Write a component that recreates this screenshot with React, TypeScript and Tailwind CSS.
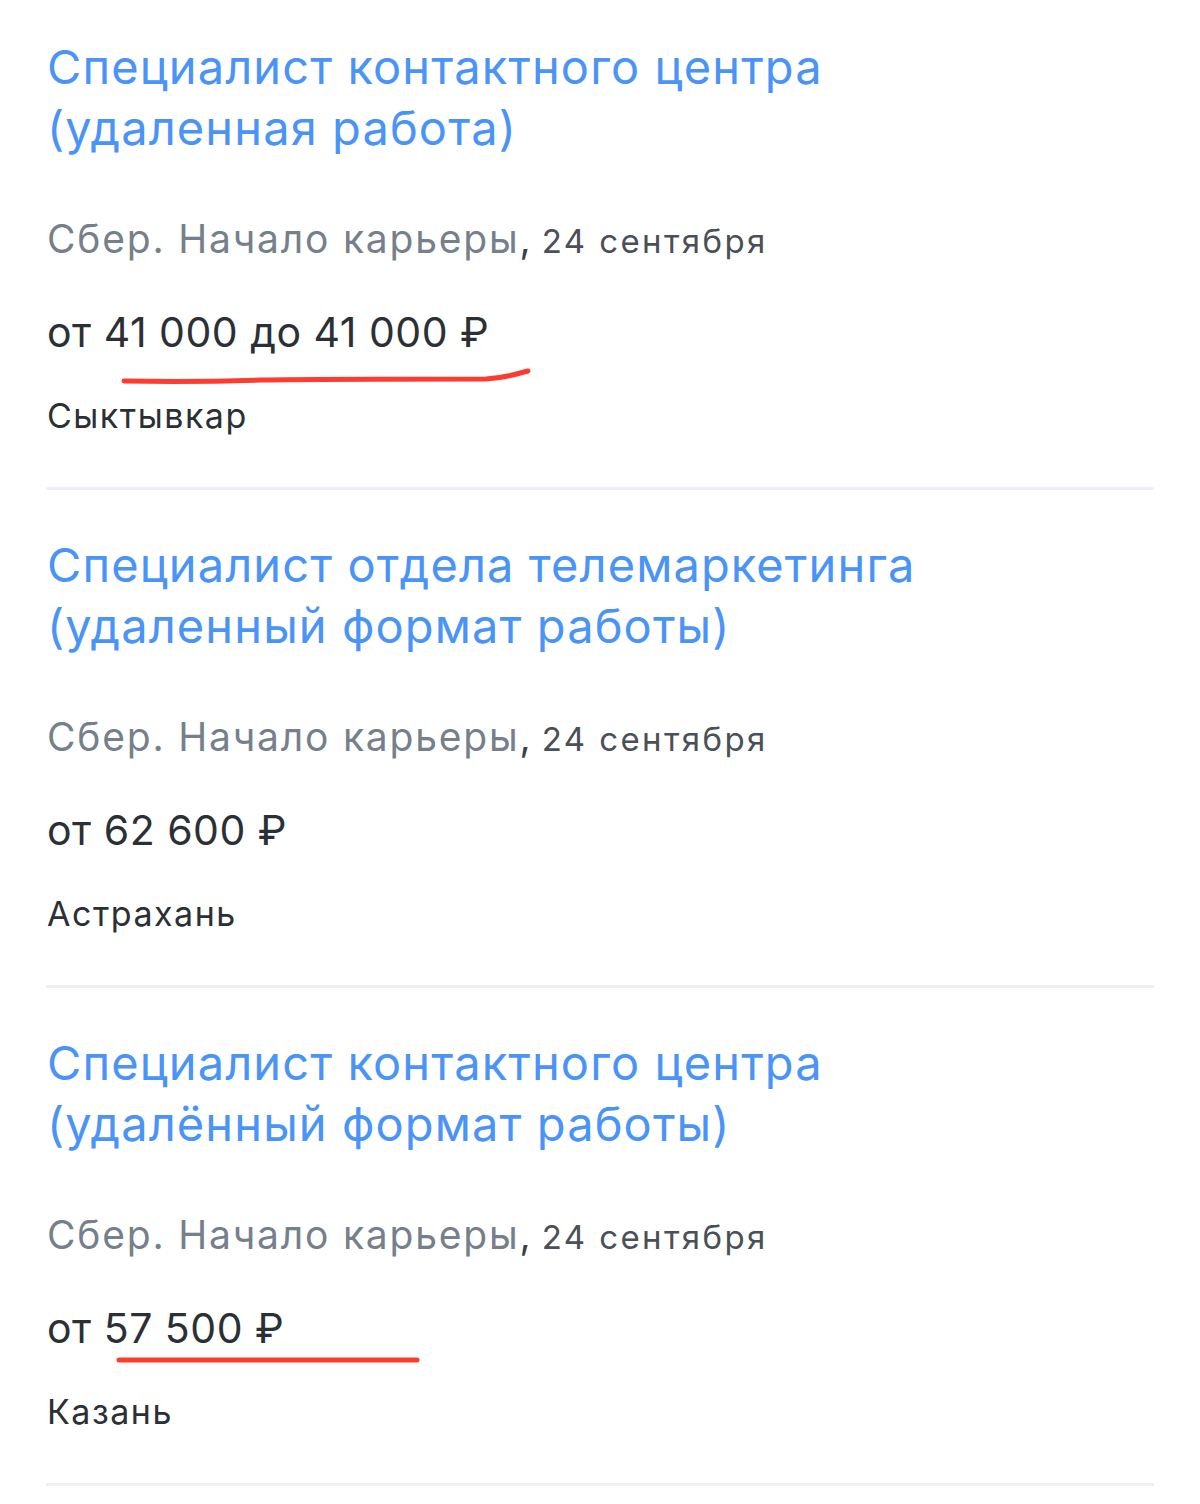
import React from 'react';

interface Vacancy {
  title: string[];
  salary: string;
  city: string;
  mark?: 'wave' | 'line';
}

const vacancies: Vacancy[] = [
  {
    title: ['Специалист контактного центра', '(удаленная работа)'],
    salary: 'от 41 000 до 41 000 ₽',
    city: 'Сыктывкар',
    mark: 'wave',
  },
  {
    title: ['Специалист отдела телемаркетинга', '(удаленный формат работы)'],
    salary: 'от 62 600 ₽',
    city: 'Астрахань',
  },
  {
    title: ['Специалист контактного центра', '(удалённый формат работы)'],
    salary: 'от 57 500 ₽',
    city: 'Казань',
    mark: 'line',
  },
];

// hand-drawn red marks over the salary
function Underline({ kind }: { kind: 'wave' | 'line' }) {
  if (kind === 'wave') {
    return (
      <svg className="absolute left-[75px] top-[60px] w-[412px] h-[20px] pointer-events-none" viewBox="0 0 412 20">
        <path
          d="M3 14 C 60 15, 110 14, 140 13 C 200 12, 300 12, 365 12 C 385 11, 395 7, 407 4"
          stroke="#ff3b30"
          strokeWidth="5"
          strokeLinecap="round"
          fill="none"
        />
      </svg>
    );
  }
  return (
    <svg className="absolute left-[70px] top-[51px] w-[304px] h-[12px] pointer-events-none" viewBox="0 0 304 12">
      <path d="M3 6 L 301 6" stroke="#ff3b30" strokeWidth="5" strokeLinecap="round" fill="none" />
    </svg>
  );
}

function VacancyCard({ v }: { v: Vacancy }) {
  return (
    <div className="flex flex-col">
      <div className="px-[1px] text-[47px] leading-[61px] text-[#4a94f8] tracking-[1.1px]">
        {v.title.map((line) => (
          <div key={line}>{line}</div>
        ))}
      </div>
      <div className="mt-[57px] px-[1px] leading-[48px] whitespace-nowrap">
        <span className="text-[39px] text-[#75808c] tracking-[1.8px]">Сбер. Начало карьеры</span>
        <span className="text-[39px] text-[#3a4047]">, </span>
        <span className="text-[33px] text-[#4a5057] tracking-[2.4px]">24 сентября</span>
      </div>
      <div className="relative mt-[36px] px-[1px] text-[41px] leading-[50px] text-[#2b3036] tracking-[0.5px]">
        {v.salary}
        {v.mark && <Underline kind={v.mark} />}
      </div>
      <div className="mt-[37px] px-[1px] text-[34px] leading-[44px] text-[#2b3036] tracking-[1.5px]">{v.city}</div>
      <div className="mt-[49px] h-[3px] bg-[#eef0f5]" />
    </div>
  );
}

export default function App() {
  return (
    <div className="min-h-[1504px] w-[1200px] bg-white font-['Inter','Noto_Sans',sans-serif]">
      <div className="flex flex-col gap-[44px] px-[46px] pt-[36px] pb-[20px]">
        {vacancies.map((v, i) => (
          <VacancyCard key={i} v={v} />
        ))}
      </div>
    </div>
  );
}
